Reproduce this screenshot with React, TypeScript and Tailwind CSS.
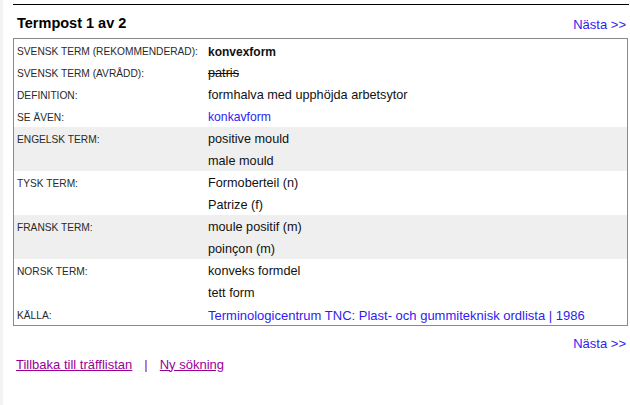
import React from 'react';

// --- Types ---
interface TermRow {
  label: string;
  values: { text: string; kind?: 'bold' | 'strike' | 'link' | 'source' }[];
  shaded?: boolean;
}

const rows: TermRow[] = [
  { label: 'Svensk term (rekommenderad):', values: [{ text: 'konvexform', kind: 'bold' }] },
  { label: 'Svensk term (avrådd):', values: [{ text: 'patris', kind: 'strike' }] },
  { label: 'Definition:', values: [{ text: 'formhalva med upphöjda arbetsytor' }] },
  { label: 'Se även:', values: [{ text: 'konkavform', kind: 'link' }] },
  { label: 'Engelsk term:', values: [{ text: 'positive mould' }, { text: 'male mould' }], shaded: true },
  { label: 'Tysk term:', values: [{ text: 'Formoberteil (n)' }, { text: 'Patrize (f)' }] },
  { label: 'Fransk term:', values: [{ text: 'moule positif (m)' }, { text: 'poinçon (m)' }], shaded: true },
  { label: 'Norsk term:', values: [{ text: 'konveks formdel' }, { text: 'tett form' }] },
  {
    label: 'Källa:',
    values: [{ text: 'Terminologicentrum TNC: Plast- och gummiteknisk ordlista | 1986', kind: 'source' }],
  },
];

function Value({ v }: { v: TermRow['values'][number] }) {
  if (v.kind === 'bold') return <span className="font-bold text-[12px] text-[#111]">{v.text}</span>;
  if (v.kind === 'strike') return <span className="line-through text-[#111]">{v.text}</span>;
  if (v.kind === 'link') return <a className="text-[12.2px] text-[#2f1cf0] cursor-pointer">{v.text}</a>;
  if (v.kind === 'source') return <a className="text-[13px] text-[#2f1cf0] cursor-pointer">{v.text}</a>;
  return <span className="text-[#111]">{v.text}</span>;
}

function App() {
  return (
    <div className="flex h-[405px] w-[630px] bg-white font-['Liberation_Sans',Arial,sans-serif] overflow-hidden">
      {/* faint page edge */}
      <div className="w-[3px] bg-[#f3f3f3]" />

      <main className="w-[616px] ml-[10px] flex flex-col">
        <div className="mt-[4px] h-px bg-black" />

        {/* Header */}
        <div className="flex items-center justify-between h-[33px] pt-[4px]">
          <h1 className="pl-[4px] text-[14.5px] font-bold text-black leading-none">Termpost 1 av 2</h1>
          <a className="text-[13px] text-[#2f1cf0] leading-none pr-[3px] mt-[2px] cursor-pointer">Nästa &gt;&gt;</a>
        </div>

        {/* Term table */}
        <div className="border border-[#8a8a8a] w-[615px]">
          {rows.map((r) => (
            <div key={r.label} className={`flex ${r.shaded ? 'bg-[#efefef]' : ''}`}>
              <div className="w-[194px] pl-[3px] pt-[3px] h-[22px] flex items-center text-[10.2px] uppercase text-[#2a2a2a]">
                {r.label}
              </div>
              <div className="flex-1 flex flex-col text-[12.7px]">
                {r.values.map((v) => (
                  <div key={v.text} className="h-[22px] pt-[3px] flex items-center">
                    <Value v={v} />
                  </div>
                ))}
              </div>
            </div>
          ))}
        </div>

        <div className="flex justify-end pr-[3px] mt-[8px]">
          <a className="text-[13px] text-[#2f1cf0] cursor-pointer">Nästa &gt;&gt;</a>
        </div>

        {/* Footer links */}
        <div className="flex items-center gap-[12px] pl-[3px] mt-[1px] text-[13px] text-[#990099]">
          <a className="underline cursor-pointer">Tillbaka till träfflistan</a>
          <span>|</span>
          <a className="underline cursor-pointer">Ny sökning</a>
        </div>
      </main>
    </div>
  );
}

export default App;
